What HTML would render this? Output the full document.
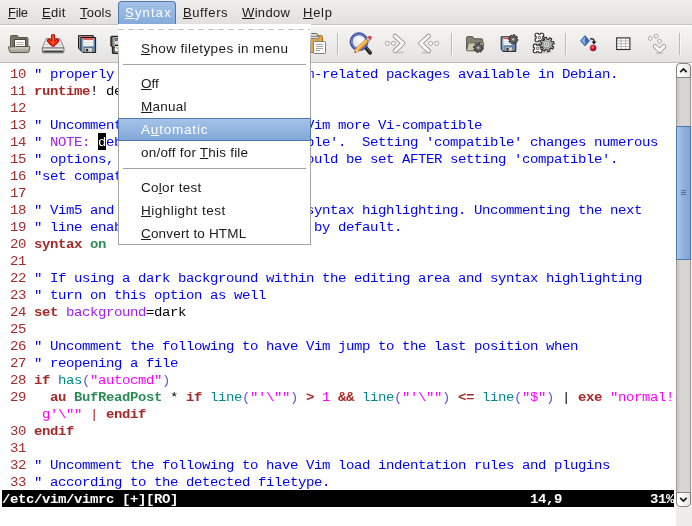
<!DOCTYPE html>
<html><head><meta charset="utf-8"><title>vimrc - GVIM</title>
<style>
html,body{margin:0;padding:0;}
body{width:692px;height:526px;overflow:hidden;position:relative;background:#edeceb;font-family:"Liberation Sans",sans-serif;}
#app{position:absolute;left:0;top:0;width:692px;height:526px;overflow:hidden;background:#edeceb;will-change:transform;}
#menubar{position:absolute;left:0;top:0;width:692px;height:24px;background:linear-gradient(#efeeed,#e1e0dd);border-bottom:1px solid #c6c4c1;}
.mi{position:absolute;top:5px;font-size:13px;line-height:16px;color:#1a1a1a;white-space:pre;}
u{text-decoration:underline;text-underline-offset:1px;text-decoration-thickness:1px;}
#msel{position:absolute;left:118px;top:1px;width:58px;height:23px;background:linear-gradient(#a3c2e9,#86abd9);border:1px solid #4f77ab;border-bottom:none;border-radius:4px 4px 0 0;box-sizing:border-box;}
#toolbar{position:absolute;left:0;top:25px;width:692px;height:37px;background:linear-gradient(#f5f5f4,#e4e3e1);border-top:1px solid #fff;box-sizing:border-box;}
.tsep{position:absolute;top:33px;width:1px;height:22px;background:#bcbab7;border-right:1px solid #f8f8f7;}
.ico{position:absolute;top:32px;width:24px;height:24px;}
#text{position:absolute;left:0;top:62px;width:692px;height:464px;background:#fff;border-top:1px solid #bdbbb8;box-sizing:border-box;}
#corner{position:absolute;left:676px;top:507px;width:16px;height:19px;background:#edeceb;}
#rgt{position:absolute;left:691px;top:63px;width:1px;height:463px;background:#edeceb;}
.row{position:absolute;left:2px;height:17px;line-height:17px;transform:scaleY(0.93);transform-origin:0 12px;font-family:"Liberation Mono",monospace;font-size:14px;letter-spacing:-0.4014px;white-space:pre;color:#000;}
.c{color:#0000ff}.n{color:#a52a2a}.b{color:#a52a2a;font-weight:bold}.s{color:#ff00ff}.i{color:#008b8b}.p{color:#6a5acd}.r{color:#a020f0}.t{color:#2e8b57;font-weight:bold}
.cur{color:#fff}
#cursor{position:absolute;left:98px;top:133px;width:8px;height:17px;background:#000;}
#status{position:absolute;left:2px;top:490px;width:672px;height:17px;background:#000;}
#status .row{top:1px;left:0;color:#fff;font-weight:bold;}
#sb{position:absolute;left:677px;top:63px;width:13px;height:444px;}
#trough{position:absolute;left:-1px;top:10px;width:15px;height:424px;background:linear-gradient(90deg,#c9c7c4,#d8d6d3 30%,#d6d4d1);border-left:1px solid #9d9b97;border-right:1px solid #9d9b97;box-sizing:border-box;}
.sbtn{position:absolute;left:-1px;width:15px;height:15px;background:linear-gradient(90deg,#ffffff,#fbfbfa 40%,#e6e5e3);border:1px solid #858380;border-radius:3px;box-sizing:border-box;}
#thumb{position:absolute;left:-1px;top:63px;width:15px;height:134px;background:linear-gradient(90deg,#a9c5e9,#8fb1dd 50%,#7fa4d4);border:1px solid #4f77ab;box-sizing:border-box;}
.grip{position:absolute;left:4px;width:5px;height:1px;background:#4f6f9c;}
#popup{position:absolute;left:118px;top:24px;width:193px;height:221px;background:#fff;border-right:1px solid #a3a3a3;border-bottom:1px solid #a3a3a3;box-sizing:border-box;}
#plb{position:absolute;left:0;top:0;width:1px;height:220px;background:linear-gradient(#fff 0px,#fff 10px,#a6a6a6 36px,#a6a6a6 100%);}
#prb{position:absolute;left:192px;top:0;width:1px;height:36px;background:linear-gradient(#fff 0px,#fff 6px,#a3a3a3 20px);}
.pi{position:absolute;left:23px;font-size:13.5px;line-height:16px;color:#1a1a1a;white-space:pre;}
.psep{position:absolute;left:5px;width:183px;height:1px;background:#a3a3a3;}
#phl{position:absolute;left:0;top:94px;width:193px;height:23px;background:linear-gradient(#a6c3e9,#82a8d7);border:1px solid #4f77ab;box-sizing:border-box;}
#tear{position:absolute;left:0;top:5px;width:192px;height:1px;background:repeating-linear-gradient(90deg,#c2c2c2 0,#c2c2c2 6px,transparent 6px,transparent 10px);}
</style></head><body><div id="app">
<div id="menubar">
<div id="msel"></div>
<span class="mi" style="left:8px;letter-spacing:-0.3px"><u>F</u>ile</span>
<span class="mi" style="left:42px;letter-spacing:0.3px"><u>E</u>dit</span>
<span class="mi" style="left:80px;letter-spacing:0.2px"><u>T</u>ools</span>
<span class="mi" style="left:125px;color:#fff;letter-spacing:1.2px"><u>S</u>yntax</span>
<span class="mi" style="left:183px;letter-spacing:0.6px"><u>B</u>uffers</span>
<span class="mi" style="left:242px;letter-spacing:0.35px"><u>W</u>indow</span>
<span class="mi" style="left:303px;letter-spacing:0.75px"><u>H</u>elp</span>
</div>
<div id="toolbar"></div>
<svg id="icons" width="692" height="38" viewBox="0 24 692 38" style="position:absolute;left:0;top:24px">
<defs>
<linearGradient id="gFlap" x1="0" y1="0" x2="0" y2="1"><stop offset="0" stop-color="#c6c6b8"/><stop offset="1" stop-color="#a2a292"/></linearGradient>
<linearGradient id="gArrow" x1="0" y1="0" x2="1" y2="0"><stop offset="0" stop-color="#c40000"/><stop offset="0.5" stop-color="#ff5a1c"/><stop offset="1" stop-color="#c40000"/></linearGradient>
<linearGradient id="gDrive" x1="0" y1="0" x2="0" y2="1"><stop offset="0" stop-color="#f4f4f4"/><stop offset="1" stop-color="#d2d2d2"/></linearGradient>
<linearGradient id="gFl" x1="0" y1="0" x2="1" y2="0"><stop offset="0" stop-color="#86a8cf"/><stop offset="1" stop-color="#5c84b3"/></linearGradient>
<radialGradient id="gLens" cx="0.55" cy="0.35" r="0.7"><stop offset="0" stop-color="#ffffff"/><stop offset="1" stop-color="#d4d4d4"/></radialGradient>
<radialGradient id="gBall" cx="0.4" cy="0.35" r="0.7"><stop offset="0" stop-color="#ff7a7a"/><stop offset="0.5" stop-color="#d81828"/><stop offset="1" stop-color="#8a0010"/></radialGradient>
<linearGradient id="gChev" x1="0" y1="0" x2="0" y2="1"><stop offset="0" stop-color="#ffffff"/><stop offset="1" stop-color="#e2e2e0"/></linearGradient>
<linearGradient id="gGear" x1="0" y1="0" x2="1" y2="1"><stop offset="0" stop-color="#d2d2d0"/><stop offset="1" stop-color="#9c9e9a"/></linearGradient>
<linearGradient id="gPr" x1="0" y1="0" x2="1" y2="0"><stop offset="0" stop-color="#2c302e"/><stop offset="0.220" stop-color="#8c8e8c"/><stop offset="0.500" stop-color="#e4e4e4"/><stop offset="1" stop-color="#c8c8c8"/></linearGradient>
</defs>
<!-- open folder -->
<g>
<path d="M10.5,51.5 V36.6 q0,-1.1 1.1,-1.1 h5.6 l1.6,2 h8 q1.1,0 1.1,1.1 V51.5 z" fill="#757563" stroke="#55554a"/>
<rect x="14.5" y="39.5" width="11" height="8" fill="#fff" stroke="#48483f"/>
<path d="M11.500,51 V37" stroke="#8c8c78" stroke-width="0.800"/>
<path d="M16.5,42.5 h7 M16.5,44.5 h7" stroke="#b4b4aa" fill="none"/>
<path d="M8.7,47 h6.300 l0.800,-0.500 h13.600 q0.600,0 0.500,0.600 l-1,4.400 q-0.300,1.100 -1.400,1.100 h-16.400 q-1.100,0 -1.400,-1.100 l-1.200,-3.900 q-0.200,-0.600 0.500,-0.600 z" fill="url(#gFlap)" stroke="#55554a"/>
<path d="M9.800,48 h19" stroke="#d6d6ca" stroke-width="0.800"/>
</g>
<!-- save (drive + arrow) -->
<g>
<path d="M46.3,38.5 h13.600 l4.200,9.500 h-22 z" fill="#e9e9e9" stroke="#8a8a8a"/>
<path d="M45,44.5 h16.4" stroke="#d0d0d0"/>
<path d="M42.3,48 h21.6 v4 q0,0.8 -0.8,0.8 h-20 q-0.8,0 -0.8,-0.8 z" fill="url(#gDrive)" stroke="#6e6e6e"/>
<path d="M43.300,51.400 h19.600" stroke="#3c403c" stroke-width="1.700"/>
<g stroke-linecap="round" stroke-linejoin="round" fill="none">
<path d="M53.100,36.100 V44.400 M49,40.800 L53.100,44.600 L57.200,40.800" stroke="#a40000" stroke-width="4.200"/>
<path d="M53.100,36.100 V44.400 M49,40.800 L53.100,44.600 L57.200,40.800" stroke="#e4200c" stroke-width="3"/>
<path d="M53.100,36 V44.200" stroke="#ff7c34" stroke-width="1.200"/>
<path d="M49.600,41 L53.100,44.200 L56.600,41" stroke="#f85a20" stroke-width="1"/>
</g>
</g>
<!-- save all (two floppies) -->
<g>
<path d="M78.500,35.600 h14.800 v14.600 h-12.800 l-2,-2 z" fill="#7c9fc8" stroke="#1c1c1c"/>
<rect x="80.500" y="36.100" width="11" height="1.800" fill="#e26a5a"/>
<path d="M80.900,37.500 h14.700 v15 h-12.700 l-2,-2 z" fill="url(#gFl)" stroke="#151515"/>
<rect x="83.200" y="38.100" width="10.200" height="8" fill="#fbfbfb"/>
<rect x="83.200" y="38.100" width="10.200" height="2" fill="#e0584a"/>
<path d="M83.200,42.500 h10.200 M83.200,44.500 h10.200" stroke="#dcdcdc"/>
<rect x="84.200" y="47.700" width="8.300" height="4.400" fill="#d4d4d4" stroke="#4a4a4a" stroke-width="0.5"/>
<rect x="85.800" y="48.800" width="2.300" height="2.600" fill="#2c2c2c"/>
</g>
<!-- printer (mostly hidden) -->
<g>
<rect x="112.400" y="44" width="8" height="9.400" rx="0.800" fill="#5a5e5c" stroke="#1c1e1d" stroke-width="1.100"/>
<path d="M110.900,37.400 q0,-1 1,-1 h9 v10.600 h-8.300 l-1.700,-1.300 z" fill="url(#gPr)" stroke="#222524" stroke-width="1.100"/>
<rect x="115" y="38" width="2.600" height="2.400" fill="#8a8a8a" stroke="#4a4a4a" stroke-width="0.700"/>
<rect x="114.800" y="44.700" width="5" height="1.400" fill="#0c0c0c"/>
<rect x="114.900" y="46.100" width="5" height="5.200" fill="#fdfdfd"/>
<path d="M116,47 l1.800,1.800" stroke="#66c848" stroke-width="1.100"/>
<rect x="114.800" y="51.300" width="5" height="1.500" fill="#8c8c8c"/>
</g>
<!-- paste -->
<g>
<rect x="308.500" y="35.500" width="14" height="17" rx="1.600" fill="#e3a548" stroke="#b06c0c"/>
<rect x="310.500" y="33.500" width="7" height="3.500" rx="1" fill="#d8d8d6" stroke="#6a6a68"/>
<rect x="309" y="36.500" width="10" height="2" fill="#e4e4e2" stroke="#6a6a68" stroke-width="0.7"/>
<rect x="313.500" y="41.500" width="12" height="12" rx="0.800" fill="#fcfcfc" stroke="#808080"/>
<path d="M316,44.500 h7 M316,46.500 h7 M316,48.500 h7 M316,50.500 h4" stroke="#a8a8a8"/>
</g>
<!-- find/replace -->
<g>
<path d="M365.500,47.200 l4.600,5.600" stroke="#262626" stroke-width="3.800" stroke-linecap="round"/>
<path d="M366.700,47.500 l3.600,4.400" stroke="#6a6a6a" stroke-width="1" stroke-linecap="round"/>
<circle cx="359" cy="41.700" r="7.800" fill="url(#gLens)" stroke="#3b4fa6" stroke-width="2.600"/>
<circle cx="359" cy="41.700" r="7.600" fill="none" stroke="#8e9be0" stroke-width="0.800"/>
<circle cx="359" cy="41.700" r="9.100" fill="none" stroke="#2c3c86" stroke-width="0.500"/>
<g transform="translate(354.600,52.600) rotate(-44.300)">
<path d="M0,0 l3.200,-1.900 h14.400 v3.800 h-14.400 z" fill="#f0a030" stroke="#b06808" stroke-width="0.500"/>
<path d="M3.200,-0.700 h14.400" stroke="#ffd080" stroke-width="1"/>
<path d="M0,0 l1.600,-1 v2 z" fill="#222"/>
<path d="M1.600,-1 l1.600,-1 v4 l-1.600,-1 z" fill="#f0d8a8"/>
<rect x="17.600" y="-2" width="2.800" height="4" fill="#b4b4b4" stroke="#666" stroke-width="0.400"/>
<path d="M20.400,-1.900 h1 q1.500,0 1.500,1.900 q0,1.900 -1.500,1.900 h-1 z" fill="#f02828"/>
</g>
</g>
<!-- forward -->
<g>
<ellipse cx="399" cy="52.500" rx="5" ry="1.200" fill="#000" opacity="0.120"/>
<path d="M395,36 l8,7.400 l-8,7.400" fill="none" stroke="#8e8e8c" stroke-width="4.600" stroke-linecap="round" stroke-linejoin="round"/>
<path d="M395,36 l8,7.400 l-8,7.400" fill="none" stroke="#fbfbfa" stroke-width="3" stroke-linecap="round" stroke-linejoin="round"/>
<circle cx="387.400" cy="43.400" r="2" fill="#fdfdfd" stroke="#9a9a98" stroke-width="0.900"/>
<circle cx="393.400" cy="43.400" r="2" fill="#fdfdfd" stroke="#9a9a98" stroke-width="0.900"/>
</g>
<!-- back -->
<g>
<ellipse cx="426" cy="52.500" rx="5" ry="1.200" fill="#000" opacity="0.120"/>
<path d="M428.600,36 l-8,7.400 l8,7.400" fill="none" stroke="#8e8e8c" stroke-width="4.600" stroke-linecap="round" stroke-linejoin="round"/>
<path d="M428.600,36 l-8,7.400 l8,7.400" fill="none" stroke="#fbfbfa" stroke-width="3" stroke-linecap="round" stroke-linejoin="round"/>
<circle cx="430.600" cy="43.400" r="2" fill="#fdfdfd" stroke="#9a9a98" stroke-width="0.900"/>
<circle cx="436.600" cy="43.400" r="2" fill="#fdfdfd" stroke="#9a9a98" stroke-width="0.900"/>
</g>
<!-- load session: folder + gear -->
<g>
<path d="M466.600,49.500 v-11.600 q0,-1.300 1.300,-1.300 h4 q1,0 1.600,1 l0.800,1.200 h7.200 q1.200,0 1.200,1.200 v9.500 z" fill="#83846f" stroke="#54554a"/>
<path d="M466.600,50 l1.600,-6.200 q0.300,-1 1.300,-1 h13.500 q1,0 0.800,1 l-1.300,6.200 q-0.200,0.800 -1,0.800 h-14 q-1,0 -0.900,-0.800 z" fill="#c6c9ae" stroke="#5e5f50"/>
<g stroke-linejoin="round">
<path d="M481.60,47.71 L483.00,47.82 A4.7,4.7 0 0 1 482.64,49.61 L481.30,49.17 A3.3,3.3 0 0 1 480.70,50.07 L480.70,50.07 L481.61,51.14 A4.7,4.7 0 0 1 480.08,52.15 L479.46,50.89 A3.3,3.3 0 0 1 478.39,51.10 L478.39,51.10 L478.28,52.50 A4.7,4.7 0 0 1 476.49,52.14 L476.93,50.80 A3.3,3.3 0 0 1 476.03,50.20 L476.03,50.20 L474.96,51.11 A4.7,4.7 0 0 1 473.95,49.58 L475.21,48.96 A3.3,3.3 0 0 1 475.00,47.89 L475.00,47.89 L473.60,47.78 A4.7,4.7 0 0 1 473.96,45.99 L475.30,46.43 A3.3,3.3 0 0 1 475.90,45.53 L475.90,45.53 L474.99,44.46 A4.7,4.7 0 0 1 476.52,43.45 L477.14,44.71 A3.3,3.3 0 0 1 478.21,44.50 L478.21,44.50 L478.32,43.10 A4.7,4.7 0 0 1 480.11,43.46 L479.67,44.80 A3.3,3.3 0 0 1 480.57,45.40 L480.57,45.40 L481.64,44.49 A4.7,4.7 0 0 1 482.65,46.02 L481.39,46.64 A3.3,3.3 0 0 1 481.60,47.71 Z" fill="#6e6e6e" stroke="#262626" stroke-width="0.900"/>
<circle cx="478.3" cy="47.8" r="1.700" fill="#c8c8c8" stroke="#3a3a3a" stroke-width="0.700"/>
</g>
</g>
<!-- save session: floppy + gear -->
<g>
<path d="M501.200,36.800 h14.600 v14.600 h-12.800 l-1.800,-1.800 z" fill="url(#gFl)" stroke="#1a1a1a"/>
<rect x="503.400" y="37.400" width="9.600" height="7.600" fill="#fbfbfb"/>
<rect x="503.400" y="37.400" width="9.600" height="1.800" fill="#e0584a"/>
<path d="M503.400,41.500 h9.600 M503.400,43.500 h9.600" stroke="#dcdcdc"/>
<rect x="505" y="47" width="7.600" height="4" fill="#d4d4d4" stroke="#4a4a4a" stroke-width="0.500"/>
<rect x="506.400" y="48" width="2.200" height="2.600" fill="#2c2c2c"/>
<g stroke-linejoin="round">
<path d="M516.50,39.31 L517.90,39.42 A4.7,4.7 0 0 1 517.54,41.21 L516.20,40.77 A3.3,3.3 0 0 1 515.60,41.67 L515.60,41.67 L516.51,42.74 A4.7,4.7 0 0 1 514.98,43.75 L514.36,42.49 A3.3,3.3 0 0 1 513.29,42.70 L513.29,42.70 L513.18,44.10 A4.7,4.7 0 0 1 511.39,43.74 L511.83,42.40 A3.3,3.3 0 0 1 510.93,41.80 L510.93,41.80 L509.86,42.71 A4.7,4.7 0 0 1 508.85,41.18 L510.11,40.56 A3.3,3.3 0 0 1 509.90,39.49 L509.90,39.49 L508.50,39.38 A4.7,4.7 0 0 1 508.86,37.59 L510.20,38.03 A3.3,3.3 0 0 1 510.80,37.13 L510.80,37.13 L509.89,36.06 A4.7,4.7 0 0 1 511.42,35.05 L512.04,36.31 A3.3,3.3 0 0 1 513.11,36.10 L513.11,36.10 L513.22,34.70 A4.7,4.7 0 0 1 515.01,35.06 L514.57,36.40 A3.3,3.3 0 0 1 515.47,37.00 L515.47,37.00 L516.54,36.09 A4.7,4.7 0 0 1 517.55,37.62 L516.29,38.24 A3.3,3.3 0 0 1 516.50,39.31 Z" fill="#6e6e6e" stroke="#262626" stroke-width="0.900"/>
<circle cx="513.2" cy="39.4" r="1.700" fill="#c8c8c8" stroke="#3a3a3a" stroke-width="0.700"/>
</g>
</g>
<!-- run script: gears -->
<g stroke-linejoin="round">
<ellipse cx="546" cy="52.600" rx="6" ry="1.200" fill="#000" opacity="0.100"/>
<path d="M536.40,33.20 L538.30,33.20 L538.30,34.20 L540.50,34.20 L540.50,33.20 L542.40,33.20 Q543.70,33.20 543.70,34.50 L543.70,36.40 L542.70,36.40 L542.70,38.60 L543.70,38.60 L543.70,40.50 Q543.70,41.80 542.40,41.80 L540.50,41.80 L540.50,40.80 L538.30,40.80 L538.30,41.80 L536.40,41.80 Q535.10,41.80 535.10,40.50 L535.10,38.60 L536.10,38.60 L536.10,36.40 L535.10,36.40 L535.10,34.50 Q535.10,33.20 536.40,33.20 Z" fill="#fafafa" stroke="#2e2e2e" stroke-width="1.100"/>
<circle cx="539.400" cy="37.500" r="1.200" fill="#e8e8e8" stroke="#3a3a3a" stroke-width="0.800"/>
<path d="M534.60,44.10 L536.50,44.10 L536.50,45.10 L538.70,45.10 L538.70,44.10 L540.60,44.10 Q541.90,44.10 541.90,45.40 L541.90,47.30 L540.90,47.30 L540.90,49.50 L541.90,49.50 L541.90,51.40 Q541.90,52.70 540.60,52.70 L538.70,52.70 L538.70,51.70 L536.50,51.70 L536.50,52.70 L534.60,52.70 Q533.30,52.70 533.30,51.40 L533.30,49.50 L534.30,49.50 L534.30,47.30 L533.30,47.30 L533.30,45.40 Q533.30,44.10 534.60,44.10 Z" fill="#fafafa" stroke="#2e2e2e" stroke-width="1.100"/>
<circle cx="537.600" cy="48.400" r="1.200" fill="#e8e8e8" stroke="#3a3a3a" stroke-width="0.800"/>
<path d="M552.03,46.08 L553.73,46.95 A7.2,7.2 0 0 1 552.40,49.17 L550.83,48.06 A5.3,5.3 0 0 1 549.37,49.14 L549.37,49.14 L549.96,50.96 A7.2,7.2 0 0 1 547.45,51.59 L547.12,49.70 A5.3,5.3 0 0 1 545.32,49.43 L545.32,49.43 L544.45,51.13 A7.2,7.2 0 0 1 542.23,49.80 L543.34,48.23 A5.3,5.3 0 0 1 542.26,46.77 L542.26,46.77 L540.44,47.36 A7.2,7.2 0 0 1 539.81,44.85 L541.70,44.52 A5.3,5.3 0 0 1 541.97,42.72 L541.97,42.72 L540.27,41.85 A7.2,7.2 0 0 1 541.60,39.63 L543.17,40.74 A5.3,5.3 0 0 1 544.63,39.66 L544.63,39.66 L544.04,37.84 A7.2,7.2 0 0 1 546.55,37.21 L546.88,39.10 A5.3,5.3 0 0 1 548.68,39.37 L548.68,39.37 L549.55,37.67 A7.2,7.2 0 0 1 551.77,39.00 L550.66,40.57 A5.3,5.3 0 0 1 551.74,42.03 L551.74,42.03 L553.56,41.44 A7.2,7.2 0 0 1 554.19,43.95 L552.30,44.28 A5.3,5.3 0 0 1 552.03,46.08 Z" fill="url(#gGear)" stroke="#2e2e2e" stroke-width="1.100"/>
<circle cx="546.400" cy="44.400" r="3.400" fill="#d6d8d4" stroke="#8a8c88" stroke-width="0.900"/>
<circle cx="546.400" cy="44.400" r="1.100" fill="#ffffff" stroke="#555" stroke-width="0.700"/>
</g>
<!-- make -->
<g>
<path d="M585,35.600 l4.500,5.200 l-4.500,5.200 l-4.500,-5.200 z" fill="#3a6ab2" stroke="#2a4f8c" stroke-width="0.600"/>
<path d="M585,36.600 v8.400 l-3.600,-4.200 z" fill="#8ab0e0"/>
<path d="M590,38.800 h2.200 q1.800,0 1.800,1.800 v1.400" fill="none" stroke="#111" stroke-width="1.300"/>
<path d="M591.600,41.600 h4.800 l-2.400,2.800 z" fill="#111"/>
<circle cx="593.100" cy="48" r="3" fill="url(#gBall)" stroke="#90000c" stroke-width="0.500"/>
</g>
<!-- table -->
<g>
<rect x="616.700" y="37.900" width="13.200" height="11.600" fill="#fff" stroke="#2e2e2e" stroke-width="1.150"/>
<path d="M621,38.600 v10.400 M625.600,38.600 v10.400 M617.400,40.900 h11.800 M617.400,43.700 h11.800 M617.400,46.500 h11.800" stroke="#ababab" stroke-width="0.800" fill="none"/>
</g>
<!-- jump to tag -->
<g>
<ellipse cx="659.600" cy="53.300" rx="4" ry="1" fill="#000" opacity="0.120"/>
<path d="M655.200,46.400 l4.400,4.200 l4.400,-4.200" fill="none" stroke="#8e8e8c" stroke-width="4.600" stroke-linecap="round" stroke-linejoin="round"/>
<path d="M655.200,46.400 l4.400,4.200 l4.400,-4.200" fill="none" stroke="#fbfbfa" stroke-width="3" stroke-linecap="round" stroke-linejoin="round"/>
<circle cx="650.300" cy="38.400" r="1.900" fill="#fdfdfd" stroke="#9a9a98" stroke-width="0.900"/>
<circle cx="656.300" cy="36.100" r="1.900" fill="#fdfdfd" stroke="#9a9a98" stroke-width="0.900"/>
<circle cx="659.500" cy="41.300" r="1.900" fill="#fdfdfd" stroke="#9a9a98" stroke-width="0.900"/>
</g>
</svg>
<div class="tsep" style="left:337px"></div>
<div class="tsep" style="left:451px"></div>
<div class="tsep" style="left:565px"></div>
<div class="tsep" style="left:679px"></div>

<div id="text"></div>
<div id="corner"></div><div id="rgt"></div>
<div id="cursor"></div>
<div class="row" style="top:66px"><span class="n"> 10 </span><span class="c">" properly set to work with the Vim-related packages available in Debian.</span></div>
<div class="row" style="top:83px"><span class="n"> 11 </span><span class="b">runtime</span>! debian.vim</div>
<div class="row" style="top:100px"><span class="n"> 12 </span></div>
<div class="row" style="top:117px"><span class="n"> 13 </span><span class="c">" Uncomment the next line to make Vim more Vi-compatible</span></div>
<div class="row" style="top:134px"><span class="n"> 14 </span><span class="c">" </span><span class="r">NOTE:</span><span class="c"> </span><span class="cur">d</span><span class="c">ebian.vim sets 'nocompatible'.  Setting 'compatible' changes numerous</span></div>
<div class="row" style="top:151px"><span class="n"> 15 </span><span class="c">" options, so any other options should be set AFTER setting 'compatible'.</span></div>
<div class="row" style="top:168px"><span class="n"> 16 </span><span class="c">"set compatible</span></div>
<div class="row" style="top:185px"><span class="n"> 17 </span></div>
<div class="row" style="top:202px"><span class="n"> 18 </span><span class="c">" Vim5 and later versions support syntax highlighting. Uncommenting the next</span></div>
<div class="row" style="top:219px"><span class="n"> 19 </span><span class="c">" line enables syntax highlighting by default.</span></div>
<div class="row" style="top:236px"><span class="n"> 20 </span><span class="b">syntax</span> <span class="t">on</span></div>
<div class="row" style="top:253px"><span class="n"> 21 </span></div>
<div class="row" style="top:270px"><span class="n"> 22 </span><span class="c">" If using a dark background within the editing area and syntax highlighting</span></div>
<div class="row" style="top:287px"><span class="n"> 23 </span><span class="c">" turn on this option as well</span></div>
<div class="row" style="top:304px"><span class="n"> 24 </span><span class="b">set</span> <span class="r">background</span>=dark</div>
<div class="row" style="top:321px"><span class="n"> 25 </span></div>
<div class="row" style="top:338px"><span class="n"> 26 </span><span class="c">" Uncomment the following to have Vim jump to the last position when</span></div>
<div class="row" style="top:355px"><span class="n"> 27 </span><span class="c">" reopening a file</span></div>
<div class="row" style="top:372px"><span class="n"> 28 </span><span class="b">if</span> <span class="i">has</span><span class="p">(</span><span class="s">"autocmd"</span><span class="p">)</span></div>
<div class="row" style="top:389px"><span class="n"> 29 </span>  <span class="b">au</span> <span class="t">BufReadPost</span> * <span class="b">if</span> <span class="i">line</span><span class="p">(</span><span class="s">"'\""</span><span class="p">)</span> <span class="b">&gt;</span> <span class="s">1</span> <span class="b">&amp;&amp;</span> <span class="i">line</span><span class="p">(</span><span class="s">"'\""</span><span class="p">)</span> <span class="b">&lt;=</span> <span class="i">line</span><span class="p">(</span><span class="s">"$"</span><span class="p">)</span> | <span class="b">exe</span> <span class="s">"normal!</span></div>
<div class="row" style="top:406px"><span class="n">    </span><span class="s"> g'\""</span> <span class="n">|</span> <span class="b">endif</span></div>
<div class="row" style="top:423px"><span class="n"> 30 </span><span class="b">endif</span></div>
<div class="row" style="top:440px"><span class="n"> 31 </span></div>
<div class="row" style="top:457px"><span class="n"> 32 </span><span class="c">" Uncomment the following to have Vim load indentation rules and plugins</span></div>
<div class="row" style="top:474px"><span class="n"> 33 </span><span class="c">" according to the detected filetype.</span></div>
<div id="status"><div class="row">/etc/vim/vimrc [+][RO]                                            14,9           31%</div></div>
<div id="sb">
<div id="trough"></div>
<div class="sbtn" style="top:0;border-radius:4px 4px 0 0"><svg width="13" height="13" viewBox="0 0 13 13" style="position:absolute;left:0;top:0"><path d="M3.200,8.200 L6.400,5 L9.600,8.200" fill="none" stroke="#111" stroke-width="1.700"/></svg></div>
<div id="thumb"><div class="grip" style="top:63px"></div><div class="grip" style="top:65px"></div><div class="grip" style="top:67px"></div></div>
<div class="sbtn" style="top:429px;border-radius:0 0 4px 4px"><svg width="13" height="13" viewBox="0 0 13 13" style="position:absolute;left:0;top:0"><path d="M3.200,4.800 L6.400,8 L9.600,4.800" fill="none" stroke="#111" stroke-width="1.700"/></svg></div>
</div>
<div id="popup">
<div id="plb"></div><div id="prb"></div>
<div id="tear"></div>
<div id="phl"></div>
<span class="pi" style="top:17px;letter-spacing:0.39px"><u>S</u>how filetypes in menu</span>
<div class="psep" style="top:40px"></div>
<span class="pi" style="top:52px;letter-spacing:0px"><u>O</u>ff</span>
<span class="pi" style="top:75px;letter-spacing:0.24px"><u>M</u>anual</span>
<span class="pi" style="top:98px;color:#fff;letter-spacing:0.8px">A<u>u</u>tomatic</span>
<span class="pi" style="top:121px;letter-spacing:0.21px">on/off for <u>T</u>his file</span>
<div class="psep" style="top:144px"></div>
<span class="pi" style="top:156px;letter-spacing:0.28px">Co<u>l</u>or test</span>
<span class="pi" style="top:179px;letter-spacing:0.47px"><u>H</u>ighlight test</span>
<span class="pi" style="top:202px;letter-spacing:0.17px"><u>C</u>onvert to HTML</span>
</div>
</div></body></html>
